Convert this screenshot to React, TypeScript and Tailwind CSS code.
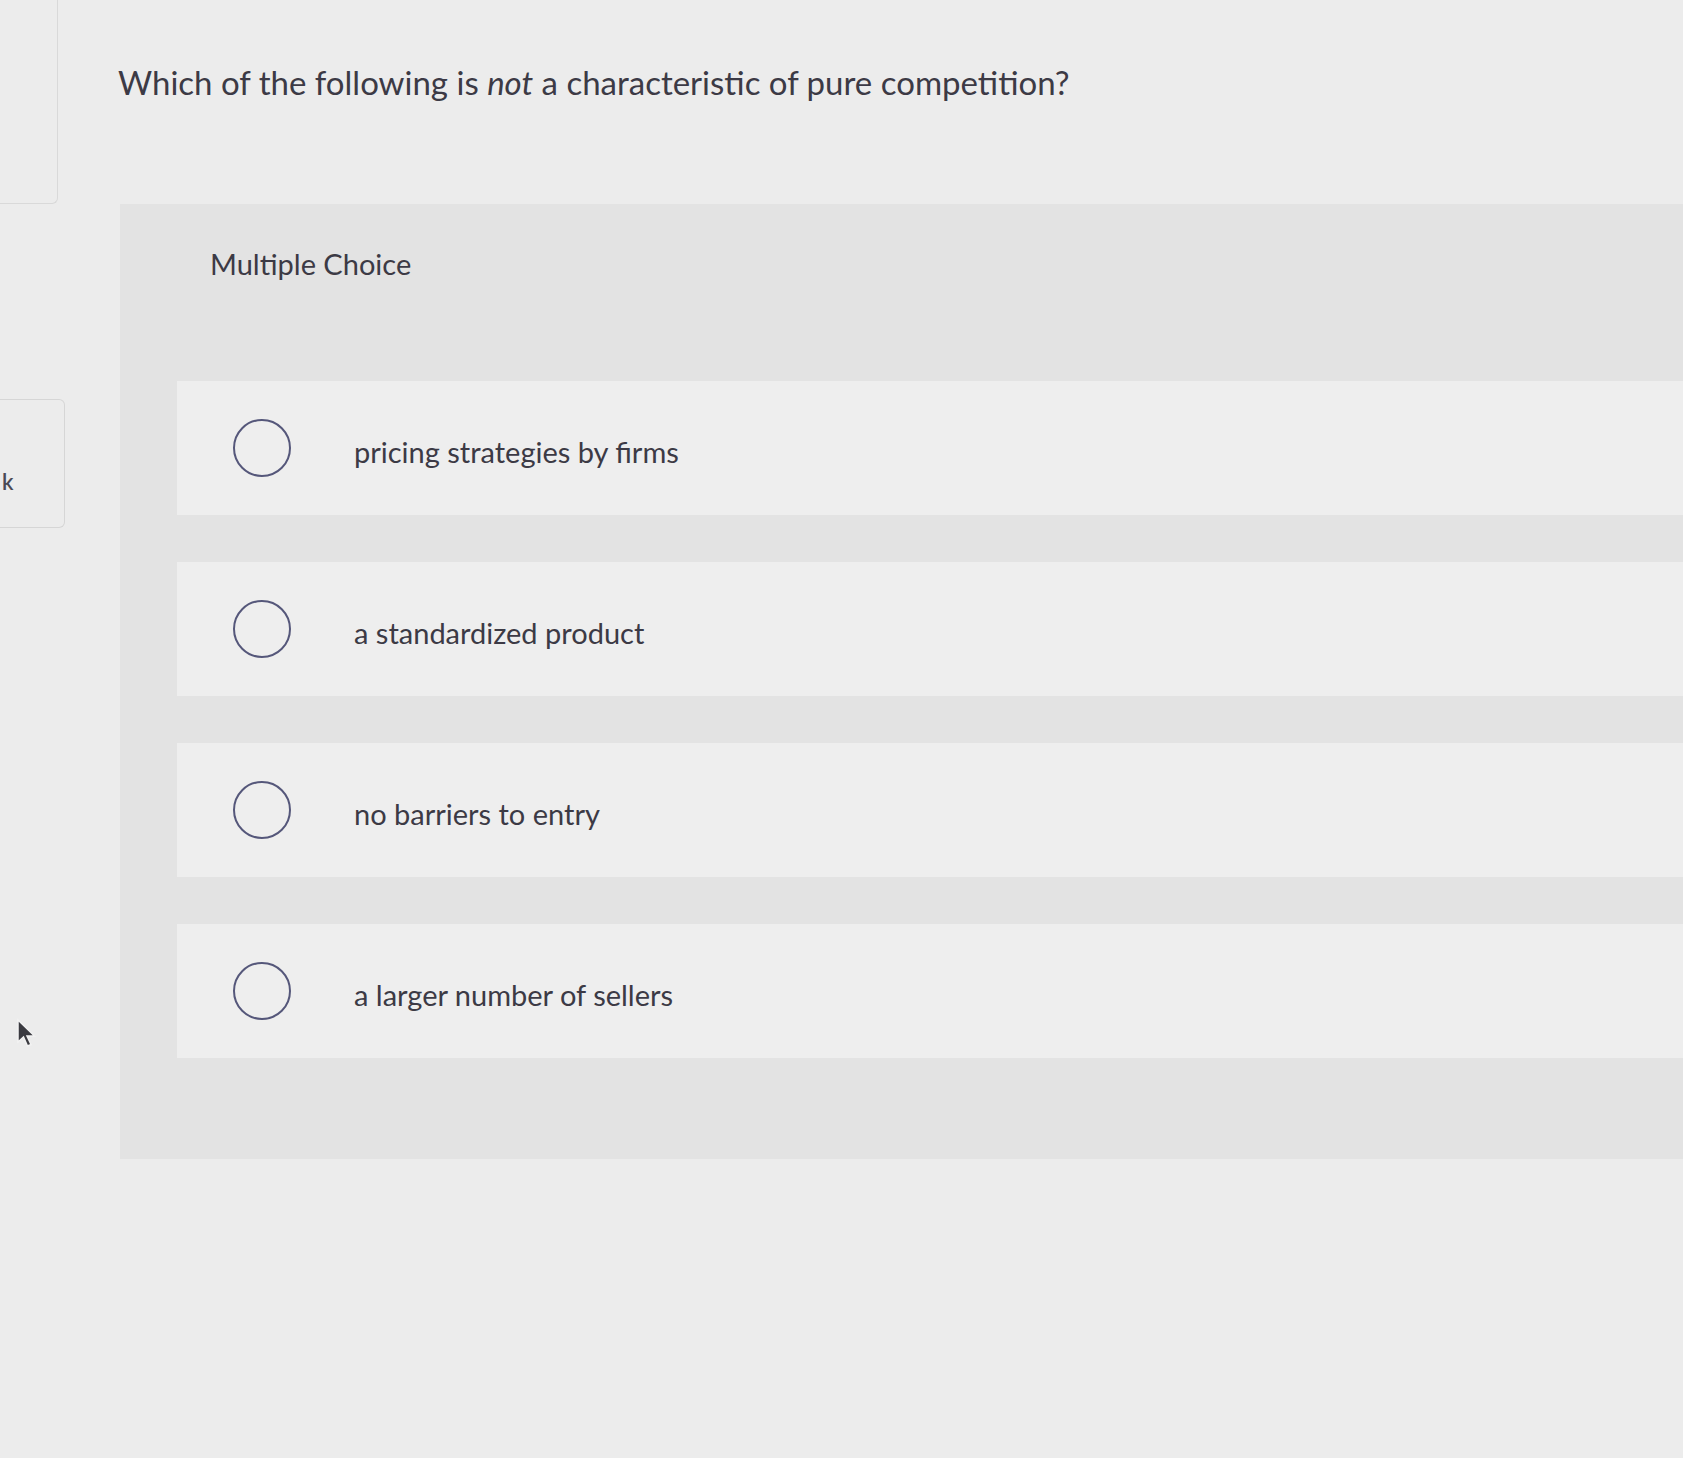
import { useState } from 'react'

const options = [
  'pricing strategies by firms',
  'a standardized product',
  'no barriers to entry',
  'a larger number of sellers',
]

const Cursor = () => (
  <svg className="absolute left-[16px] top-[1018px]" width="22" height="32" viewBox="0 0 22 32">
    <path d="M2 2 L2 24 L7.5 19 L11.5 28 L15 26.5 L11 18 L18.5 18 Z" fill="#3a3a40" stroke="#f2f2f2" strokeWidth="1.5" />
  </svg>
)

export default function App() {
  const [selected, setSelected] = useState<number | null>(null)

  return (
    <div className="relative min-h-[1458px] w-full overflow-hidden bg-[#ececec] font-['Lato','Open_Sans',sans-serif] text-[#3c3a45]">
      <div className="flex">
        {/* left rail */}
        <div className="flex w-[120px] shrink-0 flex-col">
          <div className="h-[204px] w-[58px] rounded-br-[6px] border border-l-0 border-t-0 border-[#d9d9d9]" />
          <div className="mt-[195px] flex h-[129px] w-[65px] items-center rounded-r-[6px] border border-l-0 border-[#d6d6d6] pl-[2px]">
            <span className="mt-[36px] text-[22px] font-semibold text-[#4a4a55]">k</span>
          </div>
        </div>

        {/* main */}
        <div className="flex min-w-0 flex-1 flex-col">
          <h1 className="-ml-[2px] mt-[62px] h-[142px] text-[33px] leading-[40px]">
            Which of the following is <em className="italic">not</em> a characteristic of pure competition?
          </h1>

          <section className="flex flex-col bg-[#e3e3e3] pb-[101px]">
            <div className="flex h-[107px] items-center pl-[90px] pt-[12px] text-[29px]">Multiple Choice</div>
            <div className="mt-[70px] flex flex-col gap-[47px] pl-[57px]">
              {options.map((o, i) => (
                <label
                  key={o}
                  onClick={() => setSelected(i)}
                  className="flex h-[134px] cursor-pointer items-center bg-[#eeeeee] pl-[56px]"
                >
                  <span className="flex h-[58px] w-[58px] shrink-0 items-center justify-center rounded-full border-2 border-[#55577a]">
                    {selected === i && <span className="h-[30px] w-[30px] rounded-full bg-[#55577a]" />}
                  </span>
                  <span className="ml-[63px] mt-[8px] text-[29px]">{o}</span>
                </label>
              ))}
            </div>
          </section>
        </div>
      </div>
      <Cursor />
    </div>
  )
}
